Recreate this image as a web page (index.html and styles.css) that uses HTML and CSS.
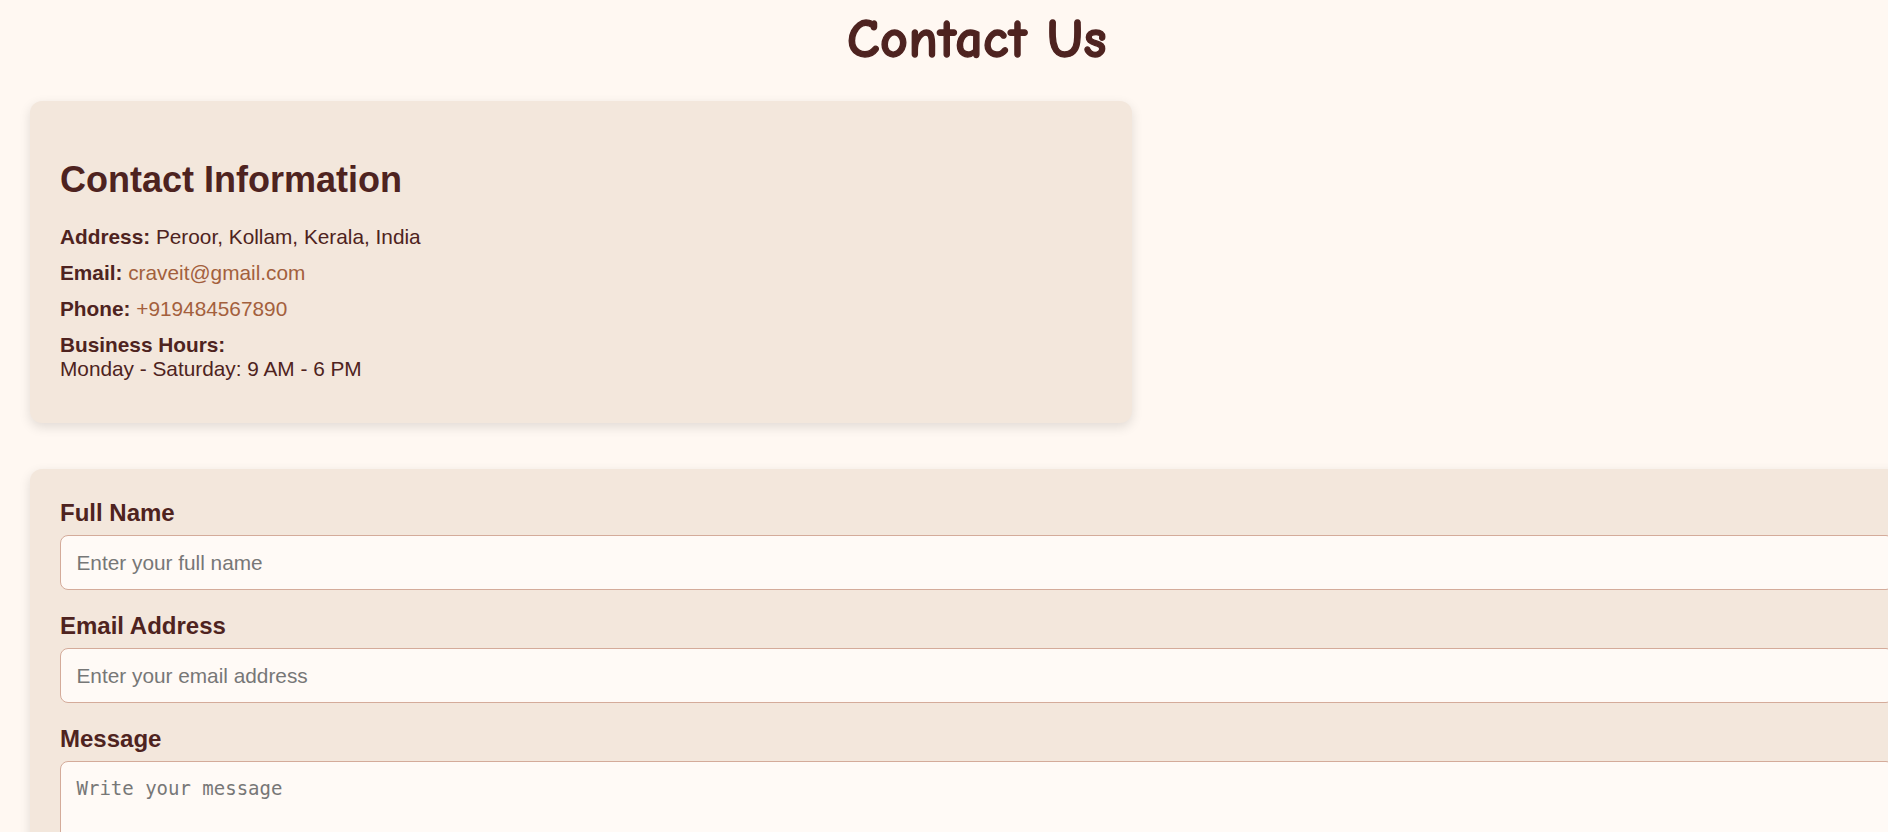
FILE: index.html
```html
<!DOCTYPE html>
<html lang="en">
<head>
<meta charset="utf-8">
<title>Contact Us</title>
<link rel="stylesheet" href="styles.css">
</head>
<body>
<main class="page">
  <h1 class="page-title">Contact Us</h1>

  <section class="card info-card">
    <h2 class="info-title">Contact Information</h2>
    <p class="info-line"><strong>Address:</strong> Peroor, Kollam, Kerala, India</p>
    <p class="info-line"><strong>Email:</strong> <a class="info-link" href="#">craveit@gmail.com</a></p>
    <p class="info-line"><strong>Phone:</strong> <a class="info-link" href="#">+919484567890</a></p>
    <p class="info-line"><strong>Business Hours:</strong><br>Monday - Saturday: 9 AM - 6 PM</p>
  </section>

  <form class="card form-card">
    <div class="field">
      <label class="field-label" for="name">Full Name</label>
      <input class="field-input" id="name" type="text" placeholder="Enter your full name">
    </div>
    <div class="field">
      <label class="field-label" for="email">Email Address</label>
      <input class="field-input" id="email" type="email" placeholder="Enter your email address">
    </div>
    <div class="field">
      <label class="field-label" for="msg">Message</label>
      <textarea class="field-input field-textarea" id="msg" rows="6" placeholder="Write your message"></textarea>
    </div>
  </form>
</main>
</body>
</html>
```

FILE: styles.css
```css
html, body {
  margin: 0;
  padding: 0;
  background: #fff8f2;
}

body {
  font-family: "Liberation Sans", Arial, sans-serif;
  color: #4e2320;
}

.page {
  width: 1894px;
  padding: 0 30px 40px;
  box-sizing: content-box;
  display: flex;
  flex-direction: column;
  align-items: flex-start;
}

.page-title {
  align-self: stretch;
  text-align: center;
  margin: 6px 0 27px;
  font-family: "Comic Sans MS", "Comic Neue", cursive;
  font-size: 54px;
  line-height: 68px;
  font-weight: 700;
  letter-spacing: 0.5px;
  -webkit-text-stroke: 1.3px #4e2320;
  color: #4e2320;
}

.card {
  background: #f3e7dc;
  border-radius: 12px;
  box-shadow: 0 4px 12px rgba(0, 0, 0, 0.12);
  padding: 30px;
  box-sizing: border-box;
}

.info-card {
  width: 1102px;
  margin-bottom: 46px;
}

.info-title {
  margin: 28px 0 24px;
  font-size: 36px;
  font-weight: 700;
  line-height: normal;
}

.info-line {
  margin: 12px 0;
  font-size: 20.8px;
  line-height: normal;
}

.info-line strong {
  font-weight: 700;
}

.info-link {
  color: #a3603d;
  text-decoration: none;
}

.form-card {
  width: 100%;
  display: flex;
  flex-direction: column;
  gap: 22px;
}

.field {
  display: flex;
  flex-direction: column;
  gap: 8px;
}

.field-label {
  font-size: 24px;
  font-weight: 700;
  line-height: normal;
}

.field-input {
  font-family: "Liberation Sans", Arial, sans-serif;
  font-size: 20.8px;
  line-height: normal;
  padding: 14.5px 15.5px;
  border: 1px solid #d4ab9a;
  border-radius: 8px;
  background: #fffaf6;
  color: #4e2320;
  outline: none;
}

.field-input::placeholder {
  color: #777;
}

.field-textarea {
  font-family: "DejaVu Sans Mono", "Liberation Mono", monospace;
  font-size: 19px;
  min-height: 180px;
  resize: vertical;
}
```
